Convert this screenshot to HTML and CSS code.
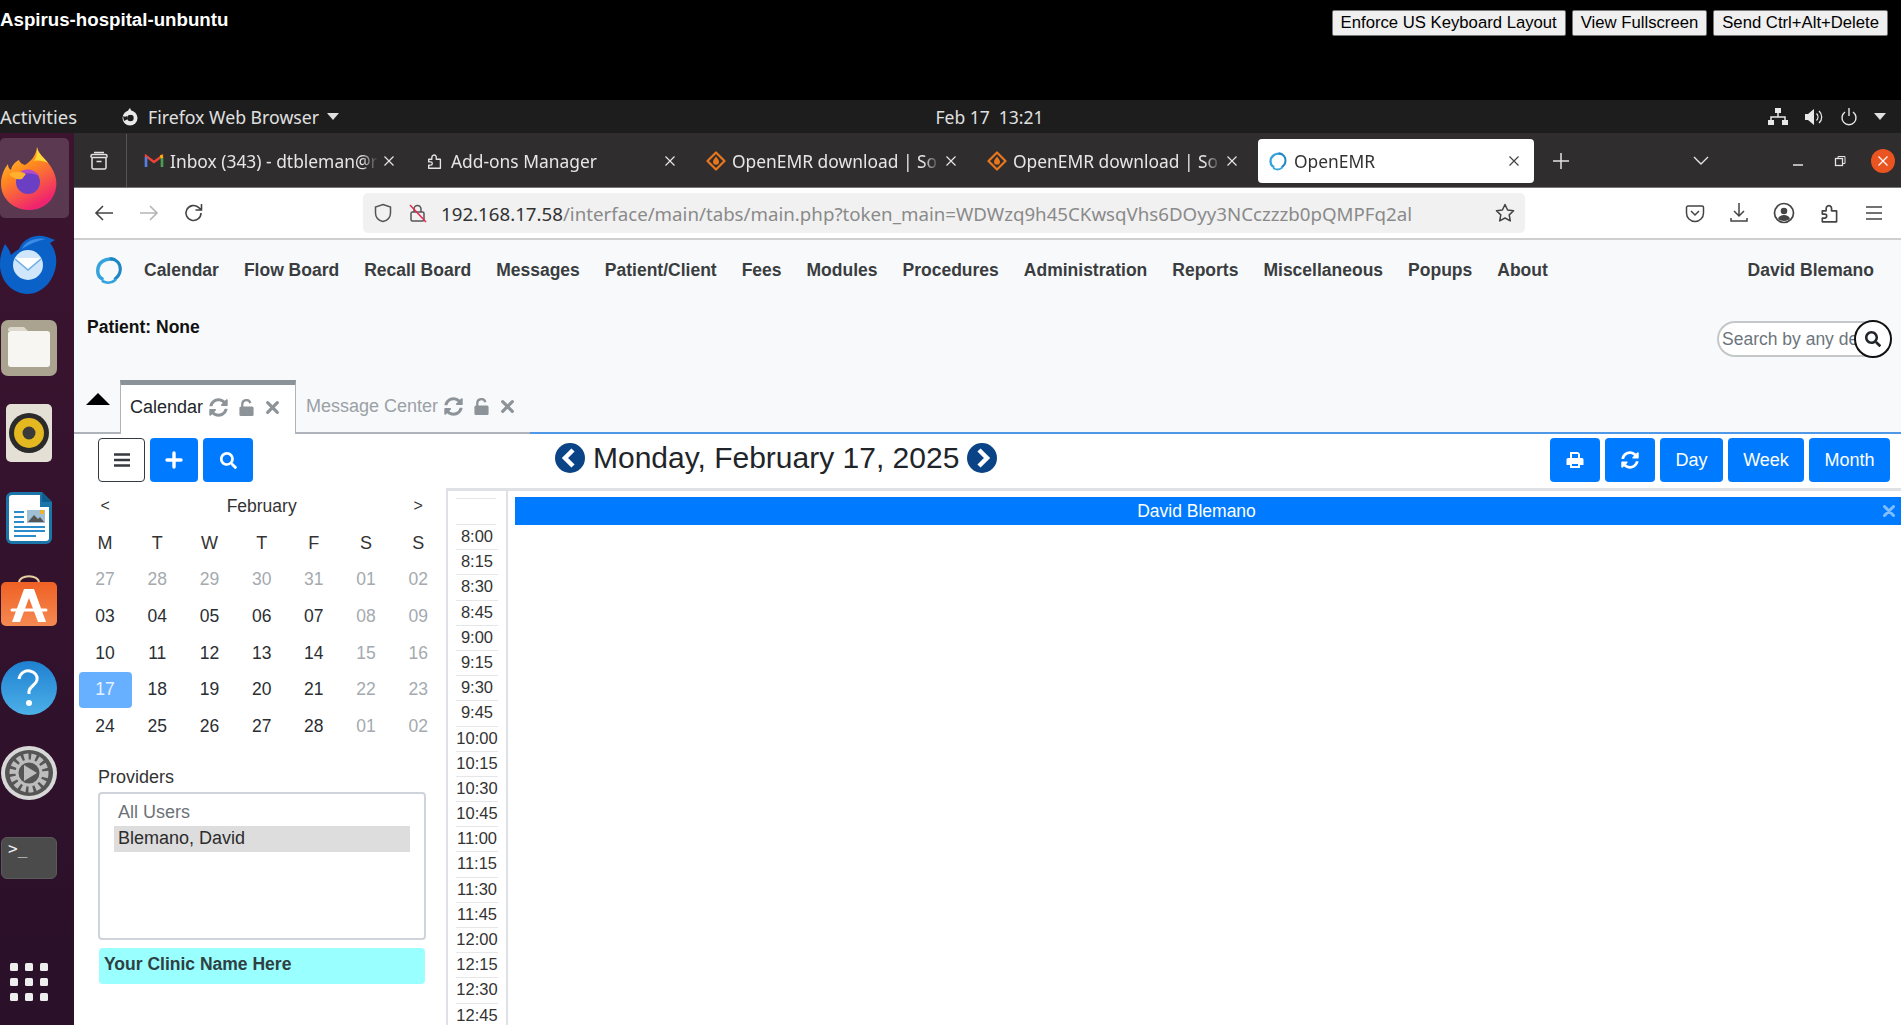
FILE: index.html
```html
<!DOCTYPE html>
<html lang="en">
<head>
<meta charset="utf-8">
<title>Aspirus-hospital-unbuntu</title>
<link rel="stylesheet" href="styles.css">
</head>
<body>
<svg class="defs" width="0" height="0" aria-hidden="true">
  <defs>
    <symbol id="i-sync" viewBox="0 0 512 512"><path fill="currentColor" d="M370.72 133.28C339.458 104.008 298.888 87.962 255.848 88c-77.458.068-144.328 53.178-162.791 126.85-1.344 5.363-6.122 9.15-11.651 9.15H24.103c-7.498 0-13.194-6.807-11.807-14.176C33.933 94.924 134.813 8 256 8c66.448 0 126.791 26.136 171.315 68.685L463.03 40.97C478.149 25.851 504 36.559 504 57.941V192c0 13.255-10.745 24-24 24H345.941c-21.382 0-32.09-25.851-16.971-40.971l41.75-41.749zM32 296h134.059c21.382 0 32.09 25.851 16.971 40.971l-41.75 41.75c31.262 29.273 71.835 45.319 114.876 45.28 77.418-.07 144.315-53.144 162.787-126.849 1.344-5.363 6.122-9.15 11.651-9.15h57.304c7.498 0 13.194 6.807 11.807 14.176C478.067 417.076 377.187 504 256 504c-66.448 0-126.791-26.136-171.315-68.685L48.97 471.03C33.851 486.149 8 475.441 8 454.059V320c0-13.255 10.745-24 24-24z"/></symbol>
    <symbol id="i-search" viewBox="0 0 512 512"><path fill="currentColor" d="M505 442.7L405.3 343c-4.5-4.5-10.6-7-17-7H372c27.6-35.3 44-79.7 44-128C416 93.1 322.9 0 208 0S0 93.1 0 208s93.1 208 208 208c48.3 0 92.7-16.4 128-44v16.3c0 6.4 2.5 12.5 7 17l99.7 99.7c9.4 9.4 24.6 9.4 33.9 0l28.3-28.3c9.4-9.4 9.4-24.6.1-34zM208 336c-70.7 0-128-57.2-128-128 0-70.7 57.2-128 128-128 70.7 0 128 57.2 128 128 0 70.7-57.2 128-128 128z"/></symbol>
    <symbol id="i-lock" viewBox="0 0 18 18"><path fill="none" stroke="currentColor" stroke-width="2.4" d="M4.5 9V5.5a4.4 4.4 0 0 1 8.6-1.2"/><rect x="1.5" y="8" width="15" height="10" rx="1.6" fill="currentColor"/></symbol>
    <symbol id="i-x" viewBox="0 0 14 14"><path d="M2.5 2.5l9 9m0-9l-9 9" stroke="currentColor" stroke-width="3" stroke-linecap="round" fill="none"/></symbol>
    <symbol id="i-tabx" viewBox="0 0 12 12"><path d="M1.5 1.5l9 9m0-9l-9 9" stroke="currentColor" stroke-width="1.2" fill="none"/></symbol>
    <symbol id="i-diamond" viewBox="0 0 20 20"><path d="M10 1.5L18.5 10 10 18.5 1.5 10z" fill="none" stroke="#e8761d" stroke-width="2.2" stroke-linejoin="round"/><path d="M10 5.5c2 2.5 3 3.8 3 5.3a3 3 0 0 1-6 0c0-1.5 1-2.8 3-5.3z" fill="#e8761d"/></symbol>
    <symbol id="i-ext" viewBox="0 0 20 20"><path fill="none" stroke="currentColor" stroke-width="1.5" stroke-linejoin="round" d="M3 8h3.5V6a2.6 2.6 0 0 1 4-2.2c1.2.8 1.1 2.2.9 4.2H16v10H3v-3.4h2.2a1.8 1.8 0 0 0 0-3.6H3z"/></symbol>
    <symbol id="i-logo" viewBox="0 0 24 24"><path d="M16 3.500C9 2 3 6 3 12.500c0 3 1.300 5.300 3.500 6.500" fill="none" stroke="#36a3dc" stroke-width="2.800" stroke-linecap="round"/><path d="M13.500 3c5 .6 8 4.500 7.500 9-.3 3.500-2 5.500-4 7" fill="none" stroke="#1f86c4" stroke-width="2.400" stroke-linecap="round"/><path d="M7 21c3.500 1.800 7.500 1.200 10-1" fill="none" stroke="#36a3dc" stroke-width="2.200" stroke-linecap="round"/></symbol>
  </defs>
</svg>

<header class="remote-bar">
  <div class="host-name">Aspirus-hospital-unbuntu</div>
  <div class="remote-actions">
    <button class="remote-btn">Enforce US Keyboard Layout</button>
    <button class="remote-btn">View Fullscreen</button>
    <button class="remote-btn">Send Ctrl+Alt+Delete</button>
  </div>
</header>

<div class="gnome-bar">
  <div class="gnome-left">
    <span class="activities">Activities</span>
    <span class="app-menu">
      <svg class="app-icon" width="20" height="20" viewBox="0 0 20 20"><circle cx="10" cy="11" r="7.500" fill="#e8e8e8"/><circle cx="10.500" cy="11" r="3.200" fill="#1d1d1d"/><path d="M10 1c1 3 3 5 5 6l-7 1c-1-3 0-5 2-7z" fill="#e8e8e8"/><path d="M3 9c1 1 3 1 4 0l1 3-4 2z" fill="#1d1d1d"/></svg>
      Firefox Web Browser
      <span class="caret-down"></span>
    </span>
  </div>
  <div class="gnome-clock">Feb 17&nbsp; 13:21</div>
  <div class="gnome-tray">
    <svg width="20" height="18" viewBox="0 0 20 18"><path fill="#e8e8e8" d="M7 0h6v5H7zM0 12h6v5H0zM14 12h6v5h-6z"/><path d="M10 5v4M3 12V9h14v3" stroke="#e8e8e8" stroke-width="1.500" fill="none"/></svg>
    <svg width="20" height="18" viewBox="0 0 20 18"><path fill="#e8e8e8" d="M1 6h3l6-5v16l-6-5H1z"/><path d="M12.500 5.500a5 5 0 0 1 0 7M15 3a8 8 0 0 1 0 12" stroke="#e8e8e8" stroke-width="1.300" fill="none"/></svg>
    <svg width="18" height="18" viewBox="0 0 18 18"><path d="M5 4a7 7 0 1 0 8 0M9 0v8" stroke="#e8e8e8" stroke-width="1.400" fill="none"/></svg>
    <span class="caret-down tray-caret"></span>
  </div>
</div>

<div class="desktop">
  <aside class="dock">
    <div class="dock-item is-active">
      <svg width="58" height="64" viewBox="0 0 58 64">
        <defs>
          <linearGradient id="ffg" x1="0" y1="0" x2="0.500" y2="1"><stop offset="0" stop-color="#ffd83a"/><stop offset="0.450" stop-color="#ff8a1e"/><stop offset="1" stop-color="#f0246e"/></linearGradient>
        </defs>
        <path fill="url(#ffg)" d="M37 1c1 7 7 10 12 17 7 9 9 19 6 28-4 12-15 18-26 18C14 64 1 53 1 38c0-8 3-15 7-20 0 3 1 5 3 6 1-5 4-8 8-10 1 3 3 4 6 5 6-4 11-9 12-18z"/>
        <circle cx="28" cy="36" r="12" fill="#6a3fc4"/>
        <path fill="#b34bc7" d="M19 27c6-6 16-4 20 3-6-3-12-3-20-3z"/>
        <path fill="#ffb02e" d="M9 28c5-3 12-3 17 0l-4 5c-5 1-10-1-13-5z"/>
        <path fill="#ffd83a" d="M37 1c1 7 7 10 11 16-4-2-9-3-14-2 3-4 3-9 3-14z"/>
      </svg>
    </div>
    <div class="dock-item">
      <svg width="60" height="64" viewBox="0 0 60 64">
        <path fill="#0a62c9" d="M20 18C24 8 36 2 48 6l8 3-5 3c5 6 7 14 6 22-2 16-14 29-29 29C14 63 0 50 1 32c0-7 2-13 5-19 3 4 5 7 6 11 2-2 5-4 8-6z"/>
        <path fill="#3c8ce6" d="M23 18c3-8 14-12 24-10-10 2-18 6-24 10z"/>
        <circle cx="29" cy="34" r="15" fill="#cfe6fb"/>
        <path fill="#fff" d="M16 27h26l-13 11z"/>
        <path d="M16 28l13 11 13-11" stroke="#6daee8" stroke-width="1.500" fill="none"/>
      </svg>
    </div>
    <div class="dock-item">
      <svg width="58" height="58" viewBox="0 0 58 58">
        <rect x="1" y="1" width="56" height="56" rx="7" fill="#a9a390"/>
        <path fill="#dcd8cc" d="M8 11a3 3 0 0 1 3-3h13l4 4h-20z"/>
        <rect x="8" y="12" width="42" height="36" rx="3" fill="#f7f6f2"/>
      </svg>
    </div>
    <div class="dock-item">
      <svg width="46" height="58" viewBox="0 0 46 58">
        <rect x="0" y="0" width="46" height="58" rx="5" fill="#e4e0d6"/>
        <circle cx="23" cy="29" r="20" fill="#2b2b2b"/>
        <circle cx="23" cy="29" r="15" fill="#e4b820"/>
        <circle cx="23" cy="29" r="6.500" fill="#3a3a3a"/>
      </svg>
    </div>
    <div class="dock-item">
      <svg width="46" height="52" viewBox="0 0 46 52">
        <path fill="#1b75a8" d="M6 0h30l10 10v36a6 6 0 0 1-6 6H6a6 6 0 0 1-6-6V6a6 6 0 0 1 6-6z"/>
        <path fill="#fff" d="M6 3h28v12h9v31a3 3 0 0 1-3 3H6a3 3 0 0 1-3-3V6a3 3 0 0 1 3-3z"/>
        <path fill="#0e5e8e" d="M36 0l10 10H36z"/>
        <path fill="#2a8ccb" d="M8 19h10v2H8zM8 24h10v2H8zM8 29h10v2H8zM8 34h31v2H8zM8 38h31v2H8zM8 43h22v2H8z"/>
        <rect x="21" y="18" width="18" height="13" fill="#9fbfd4"/>
        <path fill="#555" d="M22 30l6-7 4 4 2-2 4 5z"/>
        <rect x="34" y="18" width="4" height="4" fill="#f0b030"/>
      </svg>
    </div>
    <div class="dock-item dock-shop">
      <svg width="58" height="52" viewBox="0 0 58 52">
        <defs><linearGradient id="sg" x1="0" y1="0" x2="0" y2="1"><stop offset="0" stop-color="#ef6024"/><stop offset="1" stop-color="#f58a52"/></linearGradient></defs>
        <path d="M19 9c0-9 20-9 20 0" fill="none" stroke="#e9cfa0" stroke-width="2"/>
        <rect x="1" y="8" width="56" height="44" rx="5" fill="url(#sg)"/>
        <path fill="#fff" d="M24 15h10l12 33h-8l-9-24-9 24h-8z"/>
        <path d="M12 36h34" stroke="#fff" stroke-width="3" stroke-linecap="round"/>
      </svg>
    </div>
    <div class="dock-item">
      <svg width="58" height="56" viewBox="0 0 58 56">
        <defs><linearGradient id="hg" x1="0" y1="0" x2="0" y2="1"><stop offset="0" stop-color="#1f80d0"/><stop offset="1" stop-color="#4cb0e8"/></linearGradient></defs>
        <ellipse cx="29" cy="28" rx="28" ry="27" fill="url(#hg)"/>
        <path d="M19 19c1-6 6-9 11-8 5 1 8 5 7 9-1 5-7 6-8 11v3" fill="none" stroke="#fff" stroke-width="3"/>
        <circle cx="29" cy="43" r="3" fill="#fff"/>
      </svg>
    </div>
    <div class="dock-item">
      <svg width="58" height="56" viewBox="0 0 58 56">
        <ellipse cx="29" cy="28" rx="28" ry="27" fill="#d8d8d8"/>
        <ellipse cx="29" cy="28" rx="24" ry="23" fill="#555"/>
        <circle cx="29" cy="28" r="16" fill="none" stroke="#bdbdbd" stroke-width="7" stroke-dasharray="4.500 2.500"/>
        <circle cx="29" cy="28" r="12" fill="none" stroke="#bdbdbd" stroke-width="3"/>
        <path d="M24 20l13 8-13 8z" fill="#bdbdbd"/>
      </svg>
    </div>
    <div class="dock-item">
      <div class="terminal">&gt;_</div>
    </div>
    <div class="dock-grid">
      <i></i><i></i><i></i><i></i><i></i><i></i><i></i><i></i><i></i>
    </div>
  </aside>

  <div class="browser">
    <div class="tabstrip">
      <div class="view-btn">
        <svg width="20" height="20" viewBox="0 0 20 20"><path d="M3 6.500h14v10a1.500 1.500 0 0 1-1.500 1.500h-11A1.500 1.500 0 0 1 3 16.500zM2 6.500V5a1.500 1.500 0 0 1 1.500-1.500h13A1.500 1.500 0 0 1 18 5v1.500M5 1.500h10M7.500 10.500h5" fill="none" stroke="#e4e4e4" stroke-width="1.500"/></svg>
      </div>
      <div class="tab">
        <svg class="fav" width="18" height="14" viewBox="0 0 18 14"><path d="M1 13V2l8 6 8-6v11" fill="none" stroke="#ea4335" stroke-width="2.400"/><path d="M1 3v10" stroke="#4285f4" stroke-width="2.400"/><path d="M17 3v10" stroke="#34a853" stroke-width="2.400"/><path d="M16 1l1 3" stroke="#fbbc04" stroke-width="2.400"/></svg>
        <span class="tab-text">Inbox (343) - dtbleman@r</span>
        <svg class="tab-close" width="12" height="12"><use href="#i-tabx"/></svg>
      </div>
      <div class="tab">
        <svg class="fav fav-ext" width="18" height="18"><use href="#i-ext"/></svg>
        <span class="tab-text">Add-ons Manager</span>
        <svg class="tab-close" width="12" height="12"><use href="#i-tabx"/></svg>
      </div>
      <div class="tab">
        <svg class="fav" width="20" height="20"><use href="#i-diamond"/></svg>
        <span class="tab-text">OpenEMR download | So</span>
        <svg class="tab-close" width="12" height="12"><use href="#i-tabx"/></svg>
      </div>
      <div class="tab">
        <svg class="fav" width="20" height="20"><use href="#i-diamond"/></svg>
        <span class="tab-text">OpenEMR download | So</span>
        <svg class="tab-close" width="12" height="12"><use href="#i-tabx"/></svg>
      </div>
      <div class="tab tab-current">
        <svg class="fav" width="20" height="20"><use href="#i-logo"/></svg>
        <span class="tab-text">OpenEMR</span>
        <svg class="tab-close" width="12" height="12"><use href="#i-tabx"/></svg>
      </div>
      <div class="new-tab">
        <svg width="16" height="16" viewBox="0 0 16 16"><path d="M8 0v16M0 8h16" stroke="#e4e4e4" stroke-width="1.500"/></svg>
      </div>
      <div class="tab-list">
        <svg width="16" height="10" viewBox="0 0 16 10"><path d="M1 1l7 7 7-7" fill="none" stroke="#e4e4e4" stroke-width="1.400"/></svg>
      </div>
      <div class="win-controls">
        <svg width="12" height="12" viewBox="0 0 12 12"><path d="M1 10h10" stroke="#e4e4e4" stroke-width="1.500"/></svg>
        <svg width="12" height="12" viewBox="0 0 12 12"><rect x="1.500" y="3.500" width="7" height="7" fill="none" stroke="#e4e4e4" stroke-width="1.300"/><path d="M4 3V1.500h7v7H9" fill="none" stroke="#e4e4e4"/></svg>
        <span class="win-close"><svg width="12" height="12"><use href="#i-tabx"/></svg></span>
      </div>
    </div>

    <div class="navbar">
      <div class="nav-arrows">
        <svg width="20" height="18" viewBox="0 0 20 18"><path d="M19 9H2M9 2L2 9l7 7" fill="none" stroke="#444" stroke-width="1.600"/></svg>
        <svg width="20" height="18" viewBox="0 0 20 18"><path d="M1 9h17M11 2l7 7-7 7" fill="none" stroke="#b5b5b5" stroke-width="1.600"/></svg>
        <svg width="20" height="20" viewBox="0 0 20 20"><path d="M17 10a7.500 7.500 0 1 1-2.500-5.600L17 6.500M17.500 1v6h-6" fill="none" stroke="#444" stroke-width="1.600"/></svg>
      </div>
      <div class="urlbar">
        <svg class="url-icon" width="18" height="20" viewBox="0 0 18 20"><path d="M9 1.500l7.500 2.500v6c0 4.500-3.500 7.500-7.500 8.500C5 17.500 1.500 14.500 1.500 10V4z" fill="none" stroke="#555" stroke-width="1.500"/></svg>
        <svg class="url-icon" width="18" height="20" viewBox="0 0 18 20"><rect x="2" y="9" width="13" height="9" rx="1.500" fill="none" stroke="#555" stroke-width="1.500"/><path d="M5 9V6a3.500 3.500 0 0 1 7 0v3" fill="none" stroke="#555" stroke-width="1.500"/><path d="M1 2l16 17" stroke="#e22850" stroke-width="1.500"/></svg>
        <span class="url-text"><span class="url-host">192.168.17.58</span>/interface/main/tabs/main.php?token_main=WDWzq9h45CKwsqVhs6DOyy3NCczzzb0pQMPFq2al</span>
        <svg class="url-star" width="20" height="20" viewBox="0 0 20 20"><path d="M10 1.500l2.600 5.500 6 .8-4.400 4.100 1.100 6L10 15l-5.300 2.900 1.100-6L1.400 7.800l6-.8z" fill="none" stroke="#444" stroke-width="1.500" stroke-linejoin="round"/></svg>
      </div>
      <div class="nav-tools">
        <svg width="20" height="20" viewBox="0 0 20 20"><path d="M3 3h14a1.500 1.500 0 0 1 1.500 1.500V10a8.500 8.500 0 0 1-17 0V4.500A1.500 1.500 0 0 1 3 3z" fill="none" stroke="#444" stroke-width="1.500"/><path d="M6 8l4 4 4-4" fill="none" stroke="#444" stroke-width="1.500"/></svg>
        <svg width="20" height="22" viewBox="0 0 20 22"><path d="M10 1v13M5 9l5 5 5-5M2 16v3h16v-3" fill="none" stroke="#444" stroke-width="1.500"/></svg>
        <svg width="22" height="22" viewBox="0 0 22 22"><circle cx="11" cy="11" r="9.500" fill="none" stroke="#444" stroke-width="1.700"/><circle cx="11" cy="9" r="3.300" fill="#444"/><path d="M5 17c1-3 3-4 6-4s5 1 6 4c-3 2.500-9 2.500-12 0z" fill="#444"/></svg>
        <svg class="tool-ext" width="22" height="22"><use href="#i-ext"/></svg>
        <svg width="18" height="16" viewBox="0 0 18 16"><path d="M1 2h16M1 8h16M1 14h16" stroke="#444" stroke-width="1.500"/></svg>
      </div>
    </div>

    <div class="emr">
      <nav class="emr-nav">
        <svg class="emr-logo" width="30" height="30"><use href="#i-logo"/></svg>
        <a class="emr-link">Calendar</a>
        <a class="emr-link">Flow Board</a>
        <a class="emr-link">Recall Board</a>
        <a class="emr-link">Messages</a>
        <a class="emr-link">Patient/Client</a>
        <a class="emr-link">Fees</a>
        <a class="emr-link">Modules</a>
        <a class="emr-link">Procedures</a>
        <a class="emr-link">Administration</a>
        <a class="emr-link">Reports</a>
        <a class="emr-link">Miscellaneous</a>
        <a class="emr-link">Popups</a>
        <a class="emr-link">About</a>
        <a class="emr-link emr-user">David Blemano</a>
      </nav>

      <div class="patient-row">
        <span class="patient-label">Patient: None</span>
        <div class="search-box">
          <span class="search-input"><span class="placeholder">Search by any de</span></span>
          <span class="search-round"><svg width="16" height="16"><use href="#i-search"/></svg></span>
        </div>
      </div>

      <div class="emr-tabs">
        <span class="tabs-toggle"></span>
        <div class="emr-tab emr-tab-on">
          <span>Calendar</span>
          <svg width="19" height="19"><use href="#i-sync"/></svg>
          <svg width="17" height="17"><use href="#i-lock"/></svg>
          <svg width="15" height="15"><use href="#i-x"/></svg>
        </div>
        <div class="emr-tab">
          <span>Message Center</span>
          <svg width="19" height="19"><use href="#i-sync"/></svg>
          <svg width="17" height="17"><use href="#i-lock"/></svg>
          <svg width="15" height="15"><use href="#i-x"/></svg>
        </div>
        <span class="tabs-line"></span>
      </div>

      <div class="calendar">
        <div class="cal-head">
          <div class="cal-tools">
            <button class="btn btn-outline"><svg width="18" height="16" viewBox="0 0 18 16"><path d="M1 2.500h16M1 8h16M1 13.500h16" stroke="#343a40" stroke-width="2.600"/></svg></button>
            <button class="btn btn-plus"><svg width="18" height="18" viewBox="0 0 18 18"><path d="M9 2v14M2 9h14" stroke="#fff" stroke-width="3.400" stroke-linecap="round"/></svg></button>
            <button class="btn btn-find"><svg width="17" height="17"><use href="#i-search"/></svg></button>
          </div>
          <div class="cal-title">
            <svg width="30" height="30" viewBox="0 0 30 30"><circle cx="15" cy="15" r="15" fill="#0a4486"/><path d="M18 7l-8 8 8 8" fill="none" stroke="#fff" stroke-width="4.500"/></svg>
            <span>Monday, February 17, 2025</span>
            <svg width="30" height="30" viewBox="0 0 30 30"><circle cx="15" cy="15" r="15" fill="#0a4486"/><path d="M12 7l8 8-8 8" fill="none" stroke="#fff" stroke-width="4.500"/></svg>
          </div>
          <div class="cal-views">
            <button class="btn btn-icon"><svg width="18" height="18" viewBox="0 0 18 18"><path fill="#fff" d="M4 1h8l2 2v4h-2V3H6v4H4zM2 7h14a1.500 1.500 0 0 1 1.500 1.500V14H14v3H4v-3H.5V8.500A1.500 1.500 0 0 1 2 7zm4 6v2h6v-2z"/></svg></button>
            <button class="btn btn-icon"><svg width="18" height="18"><use href="#i-sync"/></svg></button>
            <button class="btn btn-day">Day</button>
            <button class="btn btn-week">Week</button>
            <button class="btn btn-month">Month</button>
          </div>
        </div>

        <div class="cal-body">
          <aside class="cal-side">
            <div class="mini-month">
              <span class="mm-nav">&lt;</span><span class="mm-title">February</span><span class="mm-nav">&gt;</span>
              <span class="mm-dow">M</span><span class="mm-dow">T</span><span class="mm-dow">W</span><span class="mm-dow">T</span><span class="mm-dow">F</span><span class="mm-dow">S</span><span class="mm-dow">S</span>
              <span class="mm-off">27</span><span class="mm-off">28</span><span class="mm-off">29</span><span class="mm-off">30</span><span class="mm-off">31</span><span class="mm-off">01</span><span class="mm-off">02</span>
              <span>03</span><span>04</span><span>05</span><span>06</span><span>07</span><span class="mm-off">08</span><span class="mm-off">09</span>
              <span>10</span><span>11</span><span>12</span><span>13</span><span>14</span><span class="mm-off">15</span><span class="mm-off">16</span>
              <span class="mm-today">17</span><span>18</span><span>19</span><span>20</span><span>21</span><span class="mm-off">22</span><span class="mm-off">23</span>
              <span>24</span><span>25</span><span>26</span><span>27</span><span>28</span><span class="mm-off">01</span><span class="mm-off">02</span>
            </div>
            <div class="providers-label">Providers</div>
            <div class="providers-box">
              <div class="provider-opt">All Users</div>
              <div class="provider-opt provider-on">Blemano, David</div>
            </div>
            <div class="clinic-name">Your Clinic Name Here</div>
          </aside>

          <section class="schedule">
            <div class="times">
              <div class="time-head"></div>
              <div class="time">8:00</div><div class="time">8:15</div><div class="time">8:30</div><div class="time">8:45</div>
              <div class="time">9:00</div><div class="time">9:15</div><div class="time">9:30</div><div class="time">9:45</div>
              <div class="time">10:00</div><div class="time">10:15</div><div class="time">10:30</div><div class="time">10:45</div>
              <div class="time">11:00</div><div class="time">11:15</div><div class="time">11:30</div><div class="time">11:45</div>
              <div class="time">12:00</div><div class="time">12:15</div><div class="time">12:30</div><div class="time">12:45</div>
            </div>
            <div class="day-col">
              <div class="provider-bar">
                <span>David Blemano</span>
                <svg class="bar-x" width="14" height="14"><use href="#i-x"/></svg>
              </div>
            </div>
          </section>
        </div>
      </div>
    </div>
  </div>
</div>
</body>
</html>
```

FILE: styles.css
```css
* { box-sizing: border-box; }
html, body { margin: 0; height: 100%; }
body {
  width: 1901px;
  height: 1025px;
  overflow: hidden;
  background: #000;
  font-family: "Liberation Sans", Arial, sans-serif;
  font-size: 16px;
  color: #212529;
  display: flex;
  flex-direction: column;
}
.defs { position: absolute; }
svg { display: block; flex: none; }

/* remote session bar */
.remote-bar {
  height: 100px;
  flex: none;
  background: #000;
  display: flex;
  justify-content: space-between;
  align-items: flex-start;
  padding-right: 13px;
}
.host-name { color: #fff; font-weight: 700; font-size: 18.700px; line-height: 20px; padding-top: 10px; }
.remote-actions { display: flex; gap: 6px; padding-top: 10px; }
.remote-btn {
  height: 26px;
  padding: 0 8px;
  font: 16.700px "Liberation Sans", Arial, sans-serif;
  background: #efefef;
  color: #000;
  border: 1px solid #767676;
  border-radius: 2px;
}

/* gnome top bar */
.gnome-bar {
  height: 33px;
  flex: none;
  background: #1d1d1d;
  color: #e0e0e0;
  font-family: "Noto Sans", sans-serif;
  font-size: 17.700px;
  display: grid;
  grid-template-columns: 1fr auto 1fr;
  align-items: center;
}
.gnome-left { display: flex; align-items: center; }
.activities { width: 120px; font-size: 18.500px; }
.app-menu { display: flex; align-items: center; gap: 8px; }
.caret-down { width: 0; height: 0; border: 6px solid transparent; border-top: 7px solid #e0e0e0; border-bottom: 0; display: inline-block; }
.gnome-clock { font-size: 17.500px; margin-left: 78px; }
.gnome-tray { display: flex; justify-content: flex-end; align-items: center; gap: 16px; padding-right: 15px; }

/* desktop */
.desktop { flex: 1; display: flex; min-height: 0; }
.dock {
  width: 74px;
  flex: none;
  background: linear-gradient(#3c1430, #2a1029);
  display: flex;
  flex-direction: column;
  align-items: flex-start;
  position: relative;
  padding-top: 5px;
}
.dock-item { width: 69px; height: 80px; padding-right: 11px; display: flex; align-items: center; justify-content: center; margin-bottom: 5px; border-radius: 5px; }
.dock-item.is-active { background: rgba(255,255,255,.16); }
.dock-shop { padding-bottom: 7px; }
.terminal {
  width: 56px; height: 42px; flex: none; background: #4b4b4b; border-radius: 6px; color: #eee;
  font: 16px/18px "DejaVu Sans Mono", monospace; padding: 2px 6px; border: 1px solid #5a5a5a;
}
.dock-grid {
  position: absolute; left: 9px; bottom: 24px;
  display: grid; grid-template-columns: repeat(3, 8px); gap: 7px 7px; padding-left: 1px;
}
.dock-grid i { height: 8px; background: #eee; border-radius: 1.500px; }

/* browser */
.browser { flex: 1; min-width: 0; display: flex; flex-direction: column; background: #fff; }
.tabstrip {
  height: 55px; flex: none;
  background: #2f2d2e;
  color: #e6e6e6;
  font-family: "Noto Sans", sans-serif;
  font-size: 17.400px;
  display: flex;
  align-items: center;
  border-bottom: 1px solid #777;
  padding-top: 1px;
}
.view-btn { width: 53px; height: 100%; border-right: 1px solid #555; display: flex; align-items: center; justify-content: center; margin-right: 12px; padding-right: 3px; }
.tab { width: 281px; height: 44px; display: flex; align-items: center; padding-left: 5px; flex: none; }
.fav { width: 20px; margin-right: 6px; }
.fav-ext { color: #e6e6e6; }
.tab-text {
  width: 208px; white-space: nowrap; overflow: hidden;
  -webkit-mask-image: linear-gradient(90deg, #000 92%, transparent);
  mask-image: linear-gradient(90deg, #000 92%, transparent);
}
.tab-close { margin-left: 5px; }
.tab-current { width: 276px; background: #fff; color: #333; border-radius: 4px; margin-left: -5px; padding-left: 10px; }
.tab-current .tab-text { width: 208px; }
.tab-current .tab-close { margin-left: 6px; color: #444; }
.new-tab { width: 54px; display: flex; justify-content: center; }
.tab-list { width: 200px; flex: none; padding-left: 105px; }
.win-controls { display: flex; align-items: center; gap: 30px; margin-left: 4px; }
.win-close { width: 24px; height: 24px; border-radius: 50%; background: #e95420; color: #fff; display: flex; align-items: center; justify-content: center; margin-left: -5px; }

.navbar {
  height: 52px; flex: none; background: #fff;
  border-bottom: 2px solid #cfcfcf;
  display: flex; align-items: center;
  font-family: "Noto Sans", sans-serif;
}
.nav-arrows { width: 289px; padding-left: 20px; display: flex; align-items: center; gap: 25px; flex: none; }
.urlbar {
  width: 1162px; height: 40px; flex: none; background: #f1f1f1; border-radius: 5px;
  display: flex; align-items: center; padding-left: 11px; font-size: 18.700px; color: #8a8a8a;
}
.url-icon { margin-right: 17px; }
.url-host { color: #333; }
.url-text { margin-left: -3px; white-space: nowrap; flex: 1; overflow: hidden; letter-spacing: 0; }
.url-star { margin: 0 10px 0 0; }
.nav-tools { flex: 1; display: flex; align-items: center; justify-content: flex-end; gap: 24px; padding-right: 18px; color: #444; }

/* OpenEMR */
.emr { flex: 1; min-height: 0; display: flex; flex-direction: column; background: #f8f9fa; }
.emr-nav { height: 60px; flex: none; display: flex; align-items: center; gap: 25px; padding-left: 20px; padding-right: 27px; }
.emr-logo { margin-right: -5px; }
.emr-link { font-weight: 700; color: #3a3d40; white-space: nowrap; font-size: 17.500px; }
.emr-user { margin-left: auto; }

.patient-row { height: 80px; flex: none; position: relative; display: flex; justify-content: space-between; padding: 16px 9px 0 13px; }
.patient-label { font-weight: 700; font-size: 17.500px; color: #111; line-height: 22px; }
.search-box { width: 175px; height: 38px; position: relative; margin-top: 4px; }
.search-input { position: absolute; left: 0; top: 1px; width: 160px; height: 36px; border: 2px solid #c4c8cb; border-right: 0; border-radius: 18px 0 0 18px; background: #fff; padding: 5px 0 0 3px; overflow: hidden; white-space: nowrap; color: #6c757d; font-size: 17.500px; line-height: 22px; }
.search-round { position: absolute; right: 0; top: 0; width: 38px; height: 38px; border-radius: 50%; border: 2px solid #111; background: #fff; display: flex; align-items: center; justify-content: center; color: #212529; }

.emr-tabs { height: 54px; flex: none; display: flex; align-items: stretch; position: relative; padding-left: 2px; border-bottom: 2px solid #aeb4b9; }
.tabs-line { position: absolute; left: 456px; right: 0; bottom: -2px; height: 2px; background: #4f98e8; }
.tabs-toggle { width: 0; height: 0; border-left: 12px solid transparent; border-right: 12px solid transparent; border-bottom: 12px solid #000; margin: 13px 10px 0 10px; }
.emr-tab { display: flex; align-items: center; gap: 6px; padding: 0 11px 0 10px; font-size: 18px; color: #9aa1a7; }
.emr-tab svg { color: #8c9399; }
.emr-tab-on { width: 176px; background: #fff; border: 1px solid #aeb4b9; border-top: 5px solid #8b9298; border-bottom: 0; color: #212529; margin-bottom: -2px; padding: 0 0 5px 9px; }
.emr-tab svg + svg { margin-left: 4px; }

.calendar { flex: 1; min-height: 0; background: #fff; display: flex; flex-direction: column; }
.cal-head { height: 48px; flex: none; display: flex; align-items: flex-end; padding-left: 24px; padding-right: 11px; position: relative; }
.cal-tools { display: flex; gap: 5px; width: 155px; }
.btn { height: 44px; border: 0; border-radius: 4px; background: #007bff; color: #fff; display: flex; align-items: center; justify-content: center; font: 18px "Liberation Sans", Arial, sans-serif; padding: 0; }
.btn-outline { width: 47px; background: #fff; border: 1px solid #343a40; }
.btn-plus { width: 48px; }
.btn-find { width: 50px; }
.cal-title { display: flex; align-items: center; gap: 8px; font-size: 30px; line-height: 44px; color: #212529; margin-left: 302px; align-self: flex-start; margin-top: 2px; }
.cal-views { margin-left: auto; display: flex; gap: 5px; }
.btn-icon { width: 50px; }
.btn-day { width: 63px; }
.btn-week { width: 76px; }
.btn-month { width: 81px; }

.cal-body { flex: 1; min-height: 0; display: flex; }
.cal-side { width: 372px; flex: none; padding: 6px 20px 0 5px; }
.mini-month { display: grid; grid-template-columns: repeat(7, 52.200px); grid-auto-rows: 36.700px; align-items: center; justify-items: center; font-size: 17.500px; color: #2b2f33; }
.mm-title { grid-column: 2 / 7; color: #333; }
.mm-off { color: #a4aaaf; }
.mm-nav { color: #333; font-size: 16px; }
.mm-dow { font-size: 18px; color: #333; }
.mm-today { width: 53px; height: 36px; display: flex; align-items: center; justify-content: center; background: #66b0ff; color: #e8f2ff; border-radius: 4px; }
.providers-label { margin: 20px 0 3px 19px; line-height: 24px; font-size: 18px; color: #333; }
.providers-box { margin-left: 19px; width: 328px; height: 148px; border: 2px solid #ced4da; border-radius: 4px; padding: 6px 14px; font-size: 18px; }
.provider-opt { height: 26px; line-height: 24px; padding-left: 4px; color: #6c7278; width: 296px; }
.provider-on { background: #ddd; color: #2c2c2c; }
.clinic-name { margin: 8px 0 0 20px; width: 326px; height: 36px; background: #9ff; border-radius: 4px; padding-left: 5px; font-weight: 700; font-size: 17.500px; line-height: 32px; color: #2f4043; }

.schedule { flex: 1; min-width: 0; display: flex; border-top: 3px solid #dee2e6; margin-top: 6px; border-left: 2px solid #dee2e6; }
.times { width: 60px; flex: none; padding: 7px 0 0 8px; border-right: 2px solid #dee2e6; }
.time-head { width: 40px; height: 27px; border-top: 1px solid #e4e6e8; border-bottom: 1px solid #e4e6e8; }
.time { width: 42px; height: 25.200px; border-bottom: 1px solid #e4e6e8; text-align: center; font-size: 16.500px; line-height: 23px; color: #333; white-space: nowrap; }
.day-col { flex: 1; min-width: 0; padding: 6px 0 0 7px; }
.provider-bar { height: 28px; background: #007bff; color: #fff; position: relative; display: flex; align-items: center; justify-content: center; font-size: 17.500px; padding-right: 23px; }
.bar-x { position: absolute; right: 5px; top: 7px; color: #80bdff; }
```
